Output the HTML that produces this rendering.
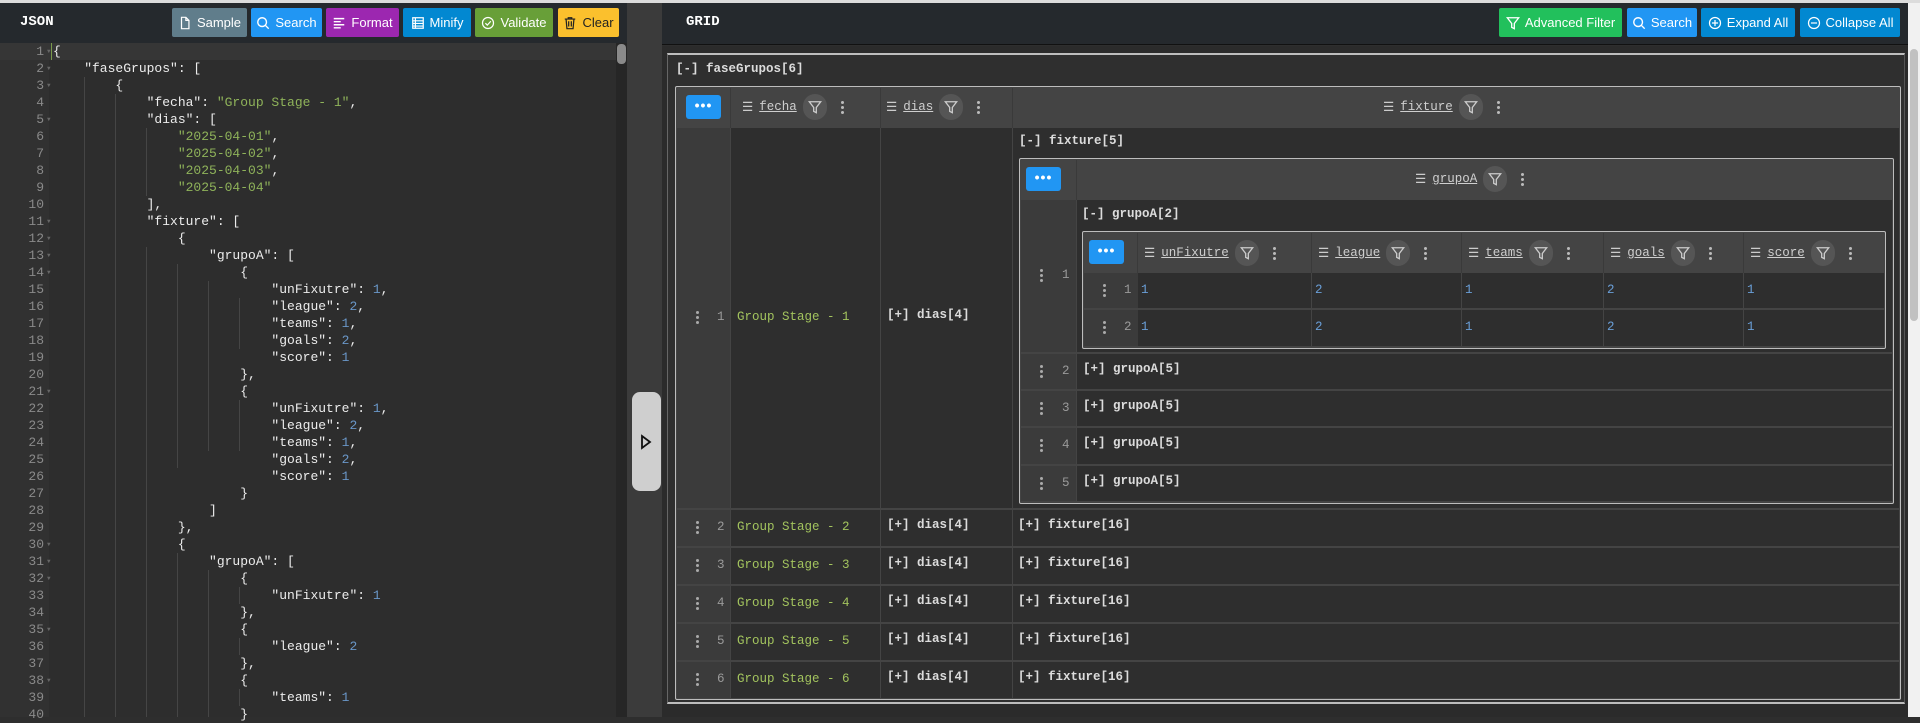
<!DOCTYPE html>
<html><head><meta charset="utf-8">
<style>
*{box-sizing:border-box;margin:0;padding:0}
body{width:1920px;height:717px;overflow:hidden;background:#2e2e2e;position:relative;font-family:"Liberation Mono",monospace;}
.a{position:absolute}
.hdr{background:#25292d;height:42px;top:3px;border-bottom:1px solid #111}
.title{font-family:"Liberation Mono",monospace;font-weight:bold;color:#fff;font-size:14px;top:14px}
.btn{position:absolute;top:8px;height:29px;color:#fff;font-family:"Liberation Sans",sans-serif;font-size:13px;display:flex;align-items:center;justify-content:center;gap:5px;border-radius:2px;white-space:nowrap}
.btn svg{width:14px;height:14px}
.ln{position:absolute;left:0;width:44px;text-align:right;color:#8a8a8a;font-size:13px;line-height:17px;height:17px}
.fold{position:absolute;left:47px;color:#666;font-size:6px;line-height:17px}
.code{position:absolute;left:53px;font-size:13px;line-height:17px;height:17px;color:#ececec;white-space:pre}
.s{color:#8fb35a}.n{color:#6a97c8}
.g{position:absolute;width:1px;background:#454545}
.t{font-size:12.5px;color:#d8d8d8;white-space:pre;position:absolute}
.b{font-weight:bold;color:#dcdcdc}
.box{position:absolute;border:1.5px solid #bdbdbd;border-radius:2px;background:#3d3d3d}
.hrow{position:absolute;background:#444}
.cell{position:absolute;background:#2e2e2e}
.idx{position:absolute;background:#3b3b3b}
.dots{position:absolute;width:3px}
.dots i{display:block;width:3px;height:3px;border-radius:50%;background:#aaa;margin-bottom:2px}
.more{position:absolute;width:35px;height:24px;background:#2196f3;border-radius:3px;color:#fff;font-size:14px;line-height:20px;text-align:center;font-family:"Liberation Sans",sans-serif;font-weight:bold;letter-spacing:1px}
.hd{position:absolute;display:flex;align-items:center;height:26px;color:#ccc;font-size:12.5px;gap:6px}
.hd u{color:#cfcfcf}
.fc{width:24px;height:26px;border-radius:13px;background:#555;display:flex;align-items:center;justify-content:center}
.vd{display:flex;flex-direction:column;gap:2px;margin-left:8px}
.vd i{width:3px;height:3px;border-radius:50%;background:#bbb;display:block}
.num{color:#9a9a9a;font-size:12.5px;position:absolute}
.grn{color:#a3c45e}
.blu{color:#6a9fd8}
</style></head><body>
<div class="a" style="left:0;top:0;width:1920px;height:3px;background:#dcdcdc"></div>

<div class="a hdr" style="left:0;width:627px"></div>
<div class="a title" style="left:20px">JSON</div>
<div class="btn" style="left:172px;width:75px;background:#607d8b"><svg viewBox="0 0 16 16" fill="none" stroke="#fff" stroke-width="1.4"><path d="M4 1.5h5l3.5 3.5v9.5h-8.5z M9 1.5v3.5h3.5"/></svg>Sample</div>
<div class="btn" style="left:251px;width:71px;background:#2196f3"><svg viewBox="0 0 16 16" fill="none" stroke="#fff" stroke-width="1.6"><circle cx="7" cy="7" r="5"/><path d="M10.5 10.5l4 4"/></svg>Search</div>
<div class="btn" style="left:326px;width:73px;background:#9c27b0"><svg viewBox="0 0 16 16" fill="none" stroke="#fff" stroke-width="1.6"><path d="M2 3h12M2 6.5h8M2 10h12M2 13.5h8"/></svg>Format</div>
<div class="btn" style="left:403px;width:68px;background:#0288d1"><svg viewBox="0 0 16 16" fill="none" stroke="#fff" stroke-width="1.4"><rect x="2" y="2" width="12" height="12"/><path d="M2 5.5h12M2 8.5h12M2 11.5h12M5 2v12"/></svg>Minify</div>
<div class="btn" style="left:475px;width:78px;background:#689f38"><svg viewBox="0 0 16 16" fill="none" stroke="#fff" stroke-width="1.4"><circle cx="8" cy="8" r="6.3"/><path d="M5 8.2l2.2 2.2 4-4.4"/></svg>Validate</div>
<div class="btn" style="left:558px;width:61px;background:#fbc02d;color:#222"><svg viewBox="0 0 16 16" fill="none" stroke="#222" stroke-width="1.4"><path d="M2 3.5h12M6 3.5V2h4v1.5M3.5 3.5l1 11h7l1-11M6.5 6v6M9.5 6v6"/></svg>Clear</div>

<div class="a" style="left:0;top:43px;width:49px;height:674px;background:#313131"></div>
<div class="a" style="left:49px;top:43px;width:567px;height:674px;background:#2d2d2d"></div>
<div class="a" style="left:0;top:43px;width:616px;height:17px;background:#363636"></div>
<div class="a" style="left:51px;top:43px;width:1px;height:17px;background:#7a9a4a"></div>
<div class="a" style="left:616px;top:43px;width:11px;height:674px;background:#262626"></div>
<div class="a" style="left:617px;top:44px;width:9px;height:20px;background:#8a8a8a;border-radius:4px"></div>

<div class="g" style="left:84px;top:77px;height:640px"></div>
<div class="g" style="left:115px;top:94px;height:623px"></div>
<div class="g" style="left:146px;top:128px;height:68px"></div>
<div class="g" style="left:146px;top:247px;height:470px"></div>
<div class="g" style="left:177px;top:264px;height:204px"></div>
<div class="g" style="left:177px;top:553px;height:164px"></div>
<div class="g" style="left:208px;top:281px;height:170px"></div>
<div class="g" style="left:208px;top:570px;height:147px"></div>
<div class="g" style="left:239px;top:298px;height:51px"></div>
<div class="g" style="left:239px;top:400px;height:51px"></div>
<div class="g" style="left:239px;top:587px;height:17px"></div>
<div class="g" style="left:239px;top:638px;height:17px"></div>
<div class="g" style="left:239px;top:689px;height:17px"></div>

<div id="ed"></div>
<script>
var L=[
['{',1],
['    "faseGrupos": [',1],
['        {',1],
['            "fecha": <s>"Group Stage - 1"</s>,',0],
['            "dias": [',1],
['                <s>"2025-04-01"</s>,',0],
['                <s>"2025-04-02"</s>,',0],
['                <s>"2025-04-03"</s>,',0],
['                <s>"2025-04-04"</s>',0],
['            ],',0],
['            "fixture": [',1],
['                {',1],
['                    "grupoA": [',1],
['                        {',1],
['                            "unFixutre": <n>1</n>,',0],
['                            "league": <n>2</n>,',0],
['                            "teams": <n>1</n>,',0],
['                            "goals": <n>2</n>,',0],
['                            "score": <n>1</n>',0],
['                        },',0],
['                        {',1],
['                            "unFixutre": <n>1</n>,',0],
['                            "league": <n>2</n>,',0],
['                            "teams": <n>1</n>,',0],
['                            "goals": <n>2</n>,',0],
['                            "score": <n>1</n>',0],
['                        }',0],
['                    ]',0],
['                },',0],
['                {',1],
['                    "grupoA": [',1],
['                        {',1],
['                            "unFixutre": <n>1</n>',0],
['                        },',0],
['                        {',1],
['                            "league": <n>2</n>',0],
['                        },',0],
['                        {',1],
['                            "teams": <n>1</n>',0],
['                        }',0]];
var h='';
for(var i=0;i<L.length;i++){var y=43+i*17;
var c=L[i][0].replace(/<s>/g,'<span class="s">').replace(/<\/s>/g,'</span>').replace(/<n>/g,'<span class="n">').replace(/<\/n>/g,'</span>');
h+='<div class="ln" style="top:'+y+'px">'+(i+1)+'</div>';
if(L[i][1])h+='<div class="fold" style="top:'+y+'px">&#9660;</div>';
h+='<div class="code" style="top:'+y+'px">'+c+'</div>';}
document.getElementById('ed').outerHTML=h;
</script>

<div class="a" style="left:627px;top:3px;width:35px;height:714px;background:#3b3b3b"></div>
<div class="a" style="left:632px;top:392px;width:29px;height:99px;background:#cfcfcf;border-radius:8px"></div>
<svg class="a" style="left:640px;top:434px" width="12" height="16" viewBox="0 0 12 16"><path d="M2 2l8 6-8 6z" fill="none" stroke="#111" stroke-width="1.8"/></svg>

<div class="a hdr" style="left:662px;width:1246px"></div>
<div class="a title" style="left:686px">GRID</div>
<div class="btn" style="left:1499px;width:123px;background:#22c05c"><svg viewBox="0 0 16 16" fill="none" stroke="#fff" stroke-width="1.5"><path d="M1.5 2h13l-5 6.5v6l-3-1.5v-4.5z"/></svg>Advanced Filter</div>
<div class="btn" style="left:1627px;width:70px;background:#2196f3"><svg viewBox="0 0 16 16" fill="none" stroke="#fff" stroke-width="1.6"><circle cx="7" cy="7" r="5"/><path d="M10.5 10.5l4 4"/></svg>Search</div>
<div class="btn" style="left:1701px;width:94px;background:#0288d1"><svg viewBox="0 0 16 16" fill="none" stroke="#fff" stroke-width="1.4"><circle cx="8" cy="8" r="6.3"/><path d="M8 4.5v7M4.5 8h7"/></svg>Expand All</div>
<div class="btn" style="left:1800px;width:100px;background:#0288d1"><svg viewBox="0 0 16 16" fill="none" stroke="#fff" stroke-width="1.4"><circle cx="8" cy="8" r="6.3"/><path d="M4.5 8h7"/></svg>Collapse All</div>

<div class="a" style="left:1908px;top:3px;width:12px;height:714px;background:#f1f1f1"></div>
<div class="a" style="left:1910px;top:49px;width:8px;height:272px;background:#c1c1c1;border-radius:4px"></div>

<div class="a" style="left:662px;top:46px;width:1246px;height:671px;background:#2b2b2b"></div>
<div class="a" style="left:667px;top:53px;width:1238px;height:651px;background:#2f2f2f;border-top:2px solid #bdbdbd;border-left:1.5px solid #666;border-bottom:2px solid #bdbdbd;border-right:1.5px solid #555"></div>
<div class="t b" style="left:676px;top:62px">[-] faseGrupos[6]</div>

<div class="box" style="left:675px;top:86px;width:1226px;height:614px;background:#444"></div>
<div class="hrow" style="left:677px;top:88px;width:1222px;height:40px"></div>
<div class="more" style="left:686px;top:95px">&bull;&bull;&bull;</div>
<div class="a" style="left:730px;top:88px;width:1px;height:40px;background:#3a3a3a"></div>
<div class="a" style="left:880px;top:88px;width:1px;height:40px;background:#3a3a3a"></div>
<div class="a" style="left:1012px;top:88px;width:1px;height:40px;background:#3a3a3a"></div>

<div class="hd" style="left:742px;top:94px">☰ <u>fecha</u><span class="fc"><svg width="14" height="14" viewBox="0 0 16 16" fill="none" stroke="#ccc" stroke-width="1.5"><path d="M1.5 2h13l-5 6.5v6l-3-1.5v-4.5z"/></svg></span><span class="vd"><i></i><i></i><i></i></span></div>
<div class="hd" style="left:886px;top:94px">☰ <u>dias</u><span class="fc"><svg width="14" height="14" viewBox="0 0 16 16" fill="none" stroke="#ccc" stroke-width="1.5"><path d="M1.5 2h13l-5 6.5v6l-3-1.5v-4.5z"/></svg></span><span class="vd"><i></i><i></i><i></i></span></div>
<div class="hd" style="left:1383px;top:94px">☰ <u>fixture</u><span class="fc"><svg width="14" height="14" viewBox="0 0 16 16" fill="none" stroke="#ccc" stroke-width="1.5"><path d="M1.5 2h13l-5 6.5v6l-3-1.5v-4.5z"/></svg></span><span class="vd"><i></i><i></i><i></i></span></div>

<div id="t1"></div>
<script>
var rows=[[128,508],[510,546],[548,584],[586,622],[624,660],[662,698]];
var h='';
for(var r=0;r<6;r++){var a=rows[r][0],b=rows[r][1],hh=b-a,cy=a+hh/2;
h+='<div class="idx" style="left:677px;top:'+a+'px;width:53px;height:'+hh+'px"></div>';
h+='<div class="cell" style="left:731px;top:'+a+'px;width:149px;height:'+hh+'px"></div>';
h+='<div class="cell" style="left:881px;top:'+a+'px;width:131px;height:'+hh+'px"></div>';
h+='<div class="cell" style="left:1013px;top:'+a+'px;width:886px;height:'+hh+'px"></div>';
h+='<div class="dots" style="left:696px;top:'+(cy-7)+'px"><i></i><i></i><i></i></div>';
h+='<div class="num" style="left:717px;top:'+(cy-8)+'px">'+(r+1)+'</div>';
h+='<div class="t grn" style="left:737px;top:'+(cy-8)+'px">Group Stage - '+(r+1)+'</div>';
h+='<div class="t b" style="left:887px;top:'+(cy-10)+'px">[+] dias[4]</div>';
if(r>0)h+='<div class="t b" style="left:1018px;top:'+(cy-10)+'px">[+] fixture[16]</div>';}
document.getElementById('t1').outerHTML=h;
</script>

<div class="t b" style="left:1019px;top:134px">[-] fixture[5]</div>
<div class="box" style="left:1019px;top:158px;width:875px;height:346px;background:#444"></div>
<div class="hrow" style="left:1021px;top:160px;width:871px;height:40px"></div>
<div class="more" style="left:1026px;top:167px">&bull;&bull;&bull;</div>
<div class="a" style="left:1076px;top:160px;width:1px;height:40px;background:#3a3a3a"></div>
<div class="hd" style="left:1415px;top:166px">☰ <u>grupoA</u><span class="fc"><svg width="14" height="14" viewBox="0 0 16 16" fill="none" stroke="#ccc" stroke-width="1.5"><path d="M1.5 2h13l-5 6.5v6l-3-1.5v-4.5z"/></svg></span><span class="vd"><i></i><i></i><i></i></span></div>
<div id="t2"></div>
<script>
var rows=[[200,352],[354,389],[391,426],[428,464],[466,501]];
var h='';
for(var r=0;r<5;r++){var a=rows[r][0],b=rows[r][1],hh=b-a,cy=a+hh/2;
h+='<div class="idx" style="left:1021px;top:'+a+'px;width:55px;height:'+hh+'px"></div>';
h+='<div class="cell" style="left:1077px;top:'+a+'px;width:815px;height:'+hh+'px"></div>';
h+='<div class="dots" style="left:1040px;top:'+(cy-7)+'px"><i></i><i></i><i></i></div>';
h+='<div class="num" style="left:1062px;top:'+(cy-8)+'px">'+(r+1)+'</div>';
if(r>0)h+='<div class="t b" style="left:1083px;top:'+(cy-10)+'px">[+] grupoA[5]</div>';}
document.getElementById('t2').outerHTML=h;
</script>
<div class="t b" style="left:1082px;top:207px">[-] grupoA[2]</div>
<div class="box" style="left:1082px;top:231px;width:804px;height:118px;background:#444"></div>
<div class="hrow" style="left:1084px;top:233px;width:800px;height:40px"></div>
<div class="more" style="left:1089px;top:240px">&bull;&bull;&bull;</div>
<div id="t3"></div>
<script>
var cols=[[1138,1311,'unFixutre'],[1312,1461,'league'],[1462,1603,'teams'],[1604,1743,'goals'],[1744,1884,'score']];
var vals=[[1,2,1,2,1],[1,2,1,2,1]];
var h='';
for(var c=0;c<5;c++){var x=cols[c][0];
h+='<div class="a" style="left:'+(x-1)+'px;top:233px;width:1px;height:40px;background:#3a3a3a"></div>';
h+='<div class="hd" style="left:'+(x+6)+'px;top:240px">☰ <u>'+cols[c][2]+'</u><span class="fc"><svg width="14" height="14" viewBox="0 0 16 16" fill="none" stroke="#ccc" stroke-width="1.5"><path d="M1.5 2h13l-5 6.5v6l-3-1.5v-4.5z"/></svg></span><span class="vd"><i></i><i></i><i></i></span></div>';}
var rs=[[273,308],[310,346]];
for(var r=0;r<2;r++){var a=rs[r][0],b=rs[r][1],hh=b-a,cy=a+hh/2;
h+='<div class="idx" style="left:1084px;top:'+a+'px;width:54px;height:'+hh+'px"></div>';
h+='<div class="dots" style="left:1103px;top:'+(cy-7)+'px"><i></i><i></i><i></i></div>';
h+='<div class="num" style="left:1124px;top:'+(cy-8)+'px">'+(r+1)+'</div>';
for(var c=0;c<5;c++){var x=cols[c][0],w=cols[c][1]-x;
h+='<div class="cell" style="left:'+x+'px;top:'+a+'px;width:'+w+'px;height:'+hh+'px"></div>';
h+='<div class="t blu" style="left:'+(x+3)+'px;top:'+(cy-8)+'px">'+vals[r][c]+'</div>';}}
document.getElementById('t3').outerHTML=h;
</script>
</body></html>
